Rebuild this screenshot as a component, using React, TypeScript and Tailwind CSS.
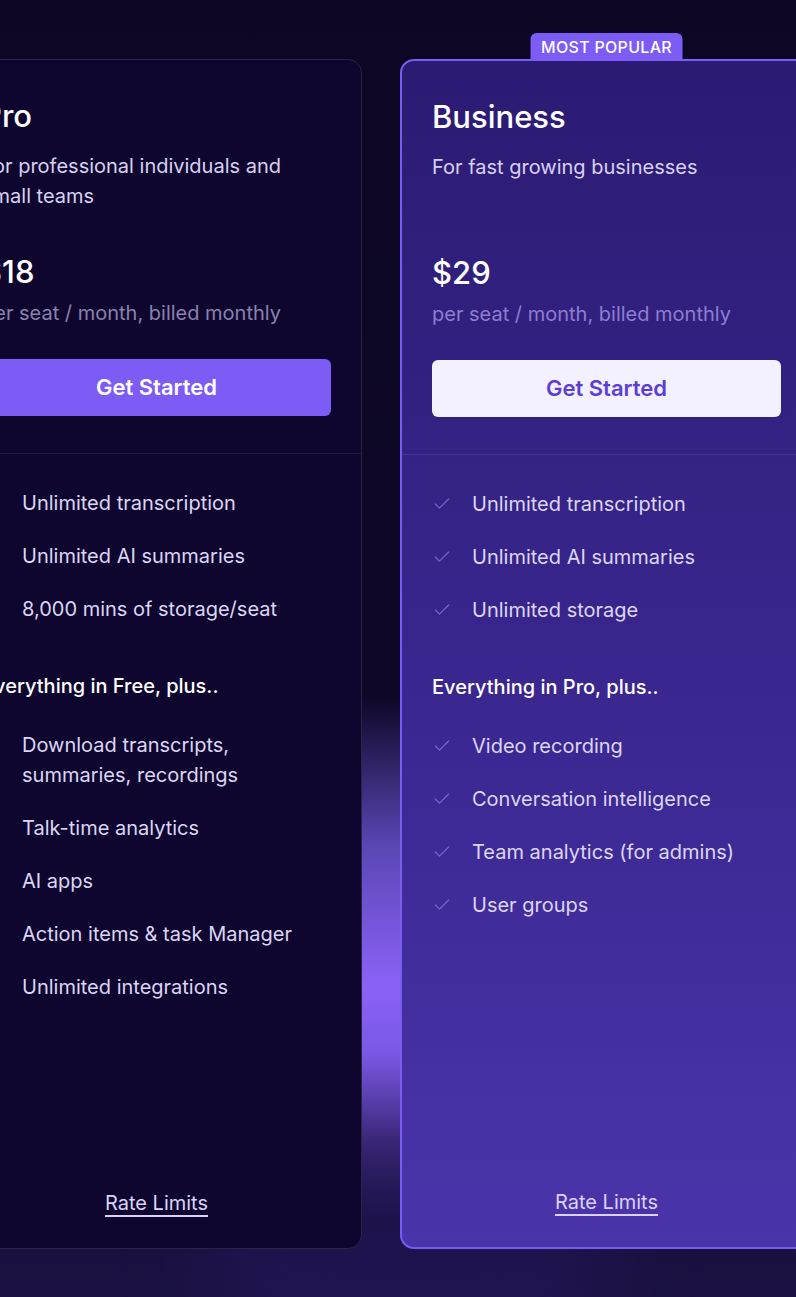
import { Check } from "lucide-react";

type Plan = {
  name: string;
  desc: string;
  price: string;
  base: string[];
  heading: string;
  extras: string[];
  featured?: boolean;
};

const plans: Plan[] = [
  {
    name: "Pro",
    desc: "For professional individuals and small teams",
    price: "$18",
    base: ["Unlimited transcription", "Unlimited AI summaries", "8,000 mins of storage/seat"],
    heading: "Everything in Free, plus..",
    extras: [
      "Download transcripts, summaries, recordings",
      "Talk-time analytics",
      "AI apps",
      "Action items & task Manager",
      "Unlimited integrations",
    ],
  },
  {
    name: "Business",
    desc: "For fast growing businesses",
    price: "$29",
    base: ["Unlimited transcription", "Unlimited AI summaries", "Unlimited storage"],
    heading: "Everything in Pro, plus..",
    extras: ["Video recording", "Conversation intelligence", "Team analytics (for admins)", "User groups"],
    featured: true,
  },
];

function Feature({ text, featured }: { text: string; featured?: boolean }) {
  return (
    <li className="flex items-start gap-[20px]">
      <Check
        className={`w-[20px] h-[20px] mt-[5px] shrink-0 ${featured ? "text-[#7763cc]" : "text-[#3a3068]"}`}
        strokeWidth={1.5}
      />
      <span className="text-[20px] leading-[30px] text-[#dcd6f4] w-[290px]">{text}</span>
    </li>
  );
}

function PlanCard({ plan }: { plan: Plan }) {
  const f = plan.featured;
  return (
    <div
      className={`relative shrink-0 min-h-[1190px] flex flex-col rounded-[14px] ${
        f
          ? "w-[413px] border-2 border-[#7b5cf2] bg-[linear-gradient(to_bottom,#2c1b73,#3a2790_55%,#4b34aa)]"
          : "w-[411px] border border-[#2a2446] bg-[#0f0630]"
      }`}
    >
      {f && (
        <div className="absolute left-1/2 -translate-x-1/2 -top-[28px] h-[28px] px-[11px] flex items-center rounded-t-[6px] bg-[#7c5cf5] text-white text-[16px] font-medium tracking-[0.3px]">
          MOST POPULAR
        </div>
      )}
      <div className={`px-[30px] pt-[38px] pb-[37px] border-b ${f ? "border-[#46349a]" : "border-[#221b3e]"}`}>
        <h3 className="text-[31px] leading-[36px] font-medium text-white">{plan.name}</h3>
        <p className="mt-[17px] min-h-[60px] text-[20px] leading-[30px] text-[#d8d2f2] w-[300px]">{plan.desc}</p>
        <div className="mt-[43px] text-[31px] leading-[36px] font-medium text-white">{plan.price}</div>
        <div className={`mt-[9px] text-[20px] leading-[28px] ${f ? "text-[#8d7ed0]" : "text-[#8a82ad]"}`}>
          per seat / month, billed monthly
        </div>
        <button
          type="button"
          className={`mt-[32px] w-full h-[57px] rounded-[6px] text-[22px] font-semibold ${
            f ? "bg-[#f3f0ff] text-[#5b3fd4]" : "bg-[#7c5cf5] text-white"
          }`}
        >
          Get Started
        </button>
      </div>
      <div className="px-[30px] pt-[34px] flex-1 flex flex-col">
        <ul className="flex flex-col gap-[23px]">
          {plan.base.map((t) => (
            <Feature key={t} text={t} featured={f} />
          ))}
        </ul>
        <div className="mt-[47px] text-[20px] leading-[30px] font-medium text-white">{plan.heading}</div>
        <ul className="mt-[29px] flex flex-col gap-[23px]">
          {plan.extras.map((t) => (
            <Feature key={t} text={t} featured={f} />
          ))}
        </ul>
        <div className="mt-auto pb-[31px] text-center">
          <a href="#" className="text-[20px] leading-[28px] text-[#d9d2fa] underline underline-offset-[5px]">
            Rate Limits
          </a>
        </div>
      </div>
    </div>
  );
}

export default function App() {
  return (
    <div
      className="relative w-full min-h-[1297px] overflow-hidden bg-[linear-gradient(to_bottom,#0d0725,#0f0829_70%,#1a1142)]"
      style={{ fontFamily: "Inter, 'Noto Sans', sans-serif" }}
    >
      <div className="absolute left-[330px] top-[700px] w-[110px] h-[520px] bg-[linear-gradient(to_bottom,transparent,#5a46b4_28%,#8b62f8_55%,#7a58e4_68%,#3a2778_85%,transparent)]" />
      <div className="absolute left-[200px] top-[1180px] w-[420px] h-[160px] rounded-full bg-[#2a1a64] opacity-40 blur-2xl" />
      <div className="relative flex items-stretch gap-[38px] ml-[-49px] pt-[59px]">
        {plans.map((p) => (
          <PlanCard key={p.name} plan={p} />
        ))}
      </div>
    </div>
  );
}
